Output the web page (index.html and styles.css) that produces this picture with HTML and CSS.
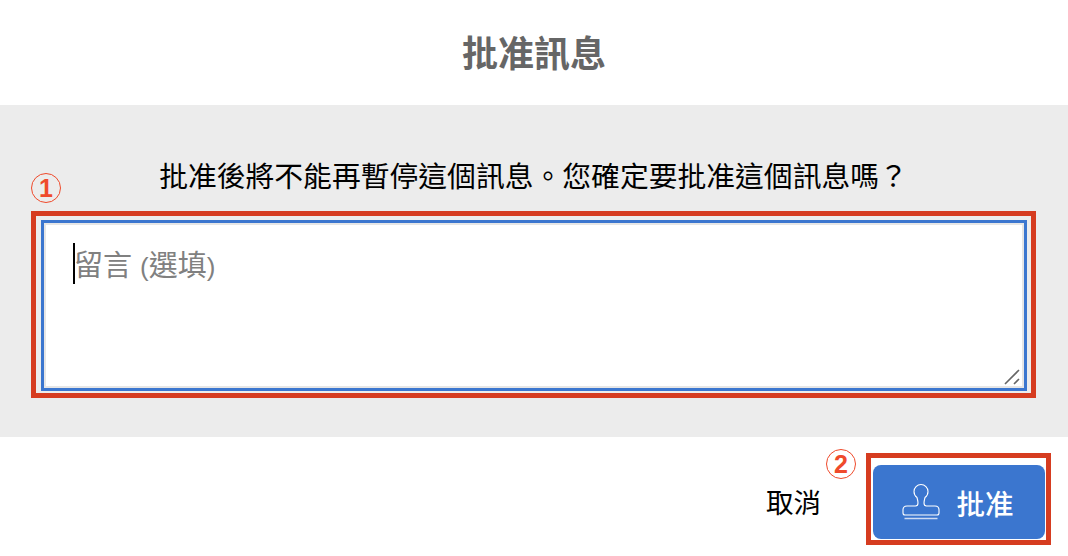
FILE: index.html
```html
<!DOCTYPE html>
<html lang="zh-Hant">
<head>
<meta charset="UTF-8">
<meta name="viewport" content="width=device-width, initial-scale=1.0">
<title>批准訊息</title>
<link rel="stylesheet" href="styles.css">
</head>
<body>

<div class="dialog">
<div class="header">批准訊息</div>

<div class="content">
<p class="message">批准後將不能再暫停這個訊息。您確定要批准這個訊息嗎？</p>
<div class="highlight highlight-field">
<span class="step step-one">1</span>
<div class="field">
<div class="input">
<span class="caret"></span>
<span class="placeholder">留言 <span class="paren">(</span>選填<span class="paren">)</span></span>
<svg class="resize" width="17" height="16" viewBox="0 0 17 16">
<path d="M1 15 15 1M10 15l5-5" fill="none" stroke="#666" stroke-width="1.6"/>
</svg>
</div>
</div>
</div>
</div>

<div class="footer">
<span class="cancel">取消</span>
<div class="highlight highlight-button">
<span class="step step-two">2</span>
<div class="approve">
<svg class="stamp" width="38" height="38" viewBox="0 0 38 38" fill="none" stroke="#fff" stroke-width="1.1">
<path d="M15 14.500C13 13 12 11 12 8.500a7 7 0 0 1 14 0c0 2.500-1 4.500-3 6-.5 2-1 3.500-1 5.500 0 1.500.8 3 2.500 3H33c2.500 0 4 1.500 4 4v3c0 1.200-.8 2-2 2H3c-1.200 0-2-.8-2-2v-3c0-2.500 1.500-4 4-4h8.500c1.700 0 2.500-1.500 2.500-3 0-2-.5-3.500-1-5.500z"/>
<path d="M2.500 35.500h33" stroke="#cfdcf2" stroke-width="1.500"/>
</svg>
<span>批准</span>
</div>
</div>
</div>
</div>

</body>
</html>
```

FILE: styles.css
```css
* {
box-sizing: border-box;
}
body {
margin: 0;
background: #fff;
font-family: "Liberation Sans", "Noto Sans CJK TC", sans-serif;
}
.dialog {
width: 1068px;
height: 556px;
display: flex;
flex-direction: column;
}
.header {
height: 105px;
padding-bottom: 3px;
display: flex;
justify-content: center;
align-items: center;
font-size: 36px;
font-weight: bold;
color: #666;
}
.content {
height: 332px;
padding: 50px 32px 0 31px;
background: #ececec;
}
.message {
margin: 0 0 14px;
height: 42px;
line-height: 44px;
text-align: center;
font-size: 28.8px;
color: #000;
}
.highlight {
position: relative;
border: 5px solid #d63c20;
}
.highlight-field {
width: 1005px;
height: 187px;
padding: 4px 4px 2px 5px;
}
.field {
height: 100%;
border: 3px solid #3b76cf;
}
.input {
position: relative;
height: 100%;
padding: 20px 28px 0;
border: 2px solid #e6e6e6;
background: #fff;
font-size: 29px;
line-height: 42px;
}
.placeholder {
color: #808080;
}
.paren {
font-size: 26px;
}
.caret {
position: absolute;
left: 27px;
top: 18px;
width: 2px;
height: 41px;
background: #000;
}
.resize {
position: absolute;
right: 1px;
bottom: 1px;
}
.step {
position: absolute;
width: 30px;
height: 30px;
display: flex;
align-items: center;
justify-content: center;
border: 1.5px solid #ef4a2b;
border-radius: 50%;
font-size: 25px;
font-weight: bold;
color: #ef4a2b;
}
.step-one {
left: -5px;
top: -43px;
}
.step-two {
left: -45px;
top: -9px;
}
.footer {
flex: 1;
display: flex;
align-items: flex-start;
padding: 16px 17px 0 0;
justify-content: flex-end;
}
.cancel {
margin: 26px 45px 0 0;
font-size: 27.5px;
line-height: 50px;
color: #000;
}
.highlight-button {
width: 185px;
height: 92px;
padding: 7px 1px 1px 2px;
}
.approve {
height: 74px;
width: 172px;
padding-right: 2px;
display: flex;
align-items: center;
justify-content: center;
gap: 16px;
border-radius: 8px;
background: #3b76cf;
color: #fff;
font-size: 28.5px;
font-weight: 500;
}
```
